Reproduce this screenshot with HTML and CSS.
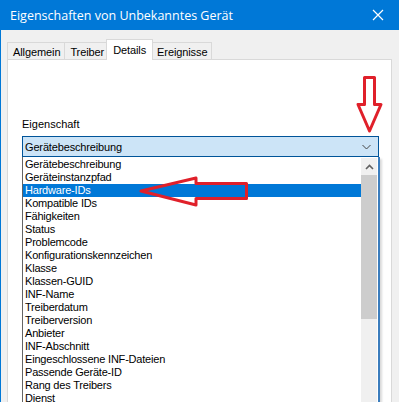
FILE: index.html
```html
<!DOCTYPE html>
<html>
<head>
<meta charset="utf-8">
<link rel="stylesheet" href="styles.css">
</head>
<body>
<div class="window">
  <div class="titlebar">
    <span class="title">Eigenschaften von Unbekanntes Gerät</span>
    <svg class="close" width="12" height="12" viewBox="0 0 12 12"><path d="M1 1L11 11M11 1L1 11" stroke="#fff" stroke-width="1.2" fill="none"/></svg>
  </div>
  <div class="tabs">
    <div class="tab">Allgemein</div>
    <div class="tab">Treiber</div>
    <div class="tab active">Details</div>
    <div class="tab">Ereignisse</div>
  </div>
  <div class="panel">
    <div class="label">Eigenschaft</div>
    <div class="combo">
      <span>Gerätebeschreibung</span>
      <svg class="chev" width="9" height="6" viewBox="0 0 9 6"><path d="M0.5 1L4.5 5L8.5 1" stroke="#444" stroke-width="1" fill="none"/></svg>
    </div>
    <div class="list">
      <div class="items">
        <div class="item">Gerätebeschreibung</div>
        <div class="item">Geräteinstanzpfad</div>
        <div class="item sel">Hardware-IDs</div>
        <div class="item">Kompatible IDs</div>
        <div class="item">Fähigkeiten</div>
        <div class="item">Status</div>
        <div class="item">Problemcode</div>
        <div class="item">Konfigurationskennzeichen</div>
        <div class="item">Klasse</div>
        <div class="item">Klassen-GUID</div>
        <div class="item">INF-Name</div>
        <div class="item">Treiberdatum</div>
        <div class="item">Treiberversion</div>
        <div class="item">Anbieter</div>
        <div class="item">INF-Abschnitt</div>
        <div class="item">Eingeschlossene INF-Dateien</div>
        <div class="item">Passende Geräte-ID</div>
        <div class="item">Rang des Treibers</div>
        <div class="item">Dienst</div>
      </div>
      <div class="scrollbar">
        <div class="sb-up"><svg width="9" height="6" viewBox="0 0 9 6"><path d="M1 5L4.5 1.5L8 5" stroke="#606060" stroke-width="1.6" fill="none"/></svg></div>
        <div class="sb-thumb"></div>
      </div>
    </div>
  </div>
  <svg class="annot" width="399" height="402" viewBox="0 0 399 402">
    <path d="M364.5 77.5H374.5V104.5H381L369.5 131L358 104.5H364.5Z" fill="none" stroke="#e0202a" stroke-width="3" stroke-linejoin="round"/>
    <path d="M246.5 183.5V198.5H196V205L141 191L196 178V183.5Z" fill="none" stroke="#e0202a" stroke-width="3" stroke-linejoin="round"/>
  </svg>
</div>
</body>
</html>
```
FILE: styles.css
```css
html, body {
  margin: 0;
  padding: 0;
}
body {
  width: 399px;
  height: 402px;
  overflow: hidden;
  background: #f0f0f0;
  font-family: "Liberation Sans", Arial, sans-serif;
  font-size: 11px;
  color: #000;
}
.window {
  position: relative;
  width: 399px;
  height: 402px;
  overflow: hidden;
  box-sizing: border-box;
  border-left: 1px solid #0078d7;
}
.titlebar {
  height: 30px;
  background: #0078d7;
  color: #fff;
  display: flex;
  align-items: center;
  justify-content: space-between;
  padding: 0 15px 0 9px;
  box-sizing: border-box;
}
.title {
  font-family: "Open Sans", "Noto Sans", sans-serif;
  font-size: 12.5px;
}
.close {
  display: block;
}
.tabs {
  display: flex;
  align-items: flex-end;
  margin: 9px 0 0 6px;
  height: 20px;
  position: relative;
  z-index: 2;
}
.tab {
  height: 17px;
  box-sizing: border-box;
  border: 1px solid #d9d9d9;
  border-bottom: none;
  background: #f0f0f0;
  padding: 2px 4px 0 5px;
  margin-right: -1px;
  line-height: 14px;
  font-size: 11px;
  letter-spacing: -0.1px;
}
.tab.active {
  height: 21px;
  background: #fff;
  margin: 0 -2px 0 -2px;
  padding: 3px 6px 0 6px;
  position: relative;
  top: 1px;
  z-index: 3;
}
.panel {
  margin-left: 6px;
  width: 385px;
  height: 400px;
  box-sizing: border-box;
  background: #fff;
  border: 1px solid #d9d9d9;
  padding: 57px 0 0 14px;
}
.label {
  font-size: 11px;
  line-height: 14px;
  margin-bottom: 5px;
}
.combo {
  width: 357px;
  height: 21px;
  box-sizing: border-box;
  background: #cce4f7;
  border: 1px solid #005499;
  display: flex;
  align-items: center;
  justify-content: space-between;
  padding: 0 7px 0 2px;
  font-size: 11px;
  letter-spacing: -0.15px;
}
.chev {
  display: block;
}
.list {
  width: 358px;
  height: 260px;
  box-sizing: border-box;
  border: 1px solid #646464;
  border-right: 2px solid #3b7dbd;
  border-top: none;
  background: #fff;
  display: flex;
  padding-top: 1px;
  box-shadow: 2px 2px 2px rgba(0,0,0,0.15);
}
.items {
  flex: 1;
  display: flex;
  flex-direction: column;
}
.item {
  height: 13px;
  line-height: 13px;
  padding-left: 2px;
  font-size: 11px;
  letter-spacing: -0.2px;
  white-space: nowrap;
}
.item.sel {
  background: #0078d7;
  color: #fff;
}
.scrollbar {
  width: 16px;
  margin-right: 1px;
  background: #f0f0f0;
  display: flex;
  flex-direction: column;
}
.sb-up {
  height: 17px;
  display: flex;
  align-items: center;
  justify-content: center;
}
.sb-thumb {
  height: 144px;
  background: #cdcdcd;
}
.annot {
  position: absolute;
  left: -1px;
  top: 0;
  pointer-events: none;
  z-index: 10;
}
```
